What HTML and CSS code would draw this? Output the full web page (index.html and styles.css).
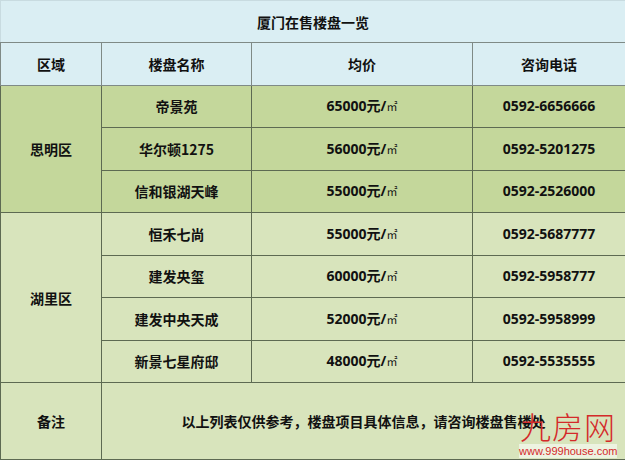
FILE: index.html
```html
<!DOCTYPE html>
<html lang="zh">
<head>
<meta charset="utf-8">
<link rel="stylesheet" href="styles.css">
</head>
<body>
<div class="wrap">
<table class="sheet">
  <colgroup>
    <col class="c1"><col class="c2"><col class="c3"><col class="c4">
  </colgroup>
  <tr class="title"><td colspan="4">厦门在售楼盘一览</td></tr>
  <tr class="head"><td>区域</td><td>楼盘名称</td><td>均价</td><td>咨询电话</td></tr>
  <tr class="g1"><td rowspan="3">思明区</td><td>帝景苑</td><td class="num">65000元/<span class="sq">㎡</span></td><td class="num">0592-6656666</td></tr>
  <tr class="g1"><td>华尔顿1275</td><td class="num">56000元/<span class="sq">㎡</span></td><td class="num">0592-5201275</td></tr>
  <tr class="g1"><td>信和银湖天峰</td><td class="num">55000元/<span class="sq">㎡</span></td><td class="num">0592-2526000</td></tr>
  <tr class="g2"><td rowspan="4">湖里区</td><td>恒禾七尚</td><td class="num">55000元/<span class="sq">㎡</span></td><td class="num">0592-5687777</td></tr>
  <tr class="g2"><td>建发央玺</td><td class="num">60000元/<span class="sq">㎡</span></td><td class="num">0592-5958777</td></tr>
  <tr class="g2"><td>建发中央天成</td><td class="num">52000元/<span class="sq">㎡</span></td><td class="num">0592-5958999</td></tr>
  <tr class="g2"><td>新景七星府邸</td><td class="num">48000元/<span class="sq">㎡</span></td><td class="num">0592-5535555</td></tr>
  <tr class="g2 note"><td>备注</td><td colspan="3">以上列表仅供参考，楼盘项目具体信息，请咨询楼盘售楼处</td></tr>
</table>
<div class="mark">
  <div class="mark-cn">九房网</div>
  <div class="mark-url">www.999house.com</div>
</div>
</div>
</body>
</html>
```
FILE: styles.css
```css
html, body { margin: 0; padding: 0; background: #fff; }
.wrap { position: relative; width: 625px; height: 460px; overflow: hidden; }
.sheet {
  width: 625px;
  border-collapse: collapse;
  table-layout: fixed;
  font-family: "Noto Sans CJK SC", "Liberation Sans", sans-serif;
  font-weight: bold;
  font-size: 14px;
  color: #111;
}
.c1 { width: 101px; }
.c2 { width: 150px; }
.c3 { width: 221px; }
.c4 { width: 153px; }
.sheet td {
  border: 1px solid #5d6a52;
  text-align: center;
  padding: 0;
  height: 41.5px;
  line-height: 20px;
}
.title td, .head td { background: #daeef3; border-color: #7f8a86; }
.title td { height: 41px; border-top-color: #c8dbe0; border-left-color: #c8dbe0; }
.g1 td { background: #c4d79b; }
.g2 td { background: #d8e4bc; }
.note td { height: 76px; }
.num { font-family: "Open Sans", "Noto Sans CJK SC", sans-serif; }
.sq { font-family: "Noto Sans CJK SC", sans-serif; font-size: 11px; font-weight: normal; }
.mark {
  position: absolute;
  right: 8px;
  bottom: 2px;
  width: 98px;
  text-align: center;
  color: #d42a2a;
  font-family: "Noto Sans CJK SC", sans-serif;
}
.mark-cn { font-size: 31px; line-height: 36px; font-weight: 300; letter-spacing: 1px; }
.mark-url { font-family: "Liberation Sans", sans-serif; font-size: 11px; line-height: 14px; background: rgba(255,255,255,0.55); }
```
